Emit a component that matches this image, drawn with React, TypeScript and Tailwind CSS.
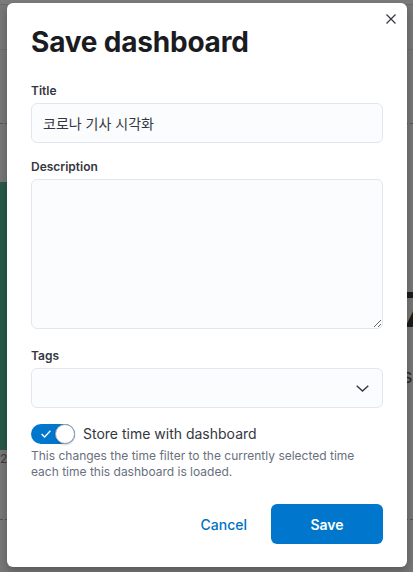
import React from "react";

const font = { fontFamily: "Inter, 'Noto Sans CJK KR', sans-serif" };

function Field({ label, children }: { label: string; children: React.ReactNode }) {
  return (
    <div className="flex flex-col">
      <label className="text-[12px] leading-[16px] font-semibold text-[#343741] mb-[4px]">{label}</label>
      {children}
    </div>
  );
}

export default function App() {
  return (
    <div className="relative w-[413px] h-[572px] overflow-hidden bg-[#777777]" style={font}>
      {/* dimmed dashboard behind the modal */}
      <div className="flex flex-col h-full">
        <div className="h-[5px] border-b border-[#6c6c6c] bg-[#7b7b7b]" />
        <div className="h-[45px] border-b border-[#6c6c6c]" />
        <div className="h-[74px] border-b border-dashed border-[#555]" />
        <div className="flex h-[396px] border-b border-dashed border-[#555]">
          <div className="flex flex-col w-[12px]">
            <div className="h-[58px]" />
            <div className="h-[268px] bg-[#29594a]" />
            <div className="text-[12px] leading-[16px] text-[#3a3a3a] mt-[1px]">2</div>
          </div>
          <div className="flex-1" />
          <div className="flex flex-col w-[10px] overflow-hidden">
            <div className="h-[166px]" />
            <div className="text-[48px] leading-[40px] font-bold text-[#1b1b1b] -ml-[2px]">7</div>
            <div className="h-[36px]" />
            <div className="text-[20px] leading-[20px] text-[#2a2a2a] -ml-[1px]">s</div>
          </div>
        </div>
      </div>

      {/* modal */}
      <div className="absolute left-[7px] top-[3px] w-[400px] h-[564px] bg-white rounded-[6px] shadow-[0_4px_8px_rgba(0,0,0,0.25)] flex flex-col px-[24px]">
        <button className="absolute right-[8px] top-[8px] w-[16px] h-[16px] flex items-center justify-center text-[#343741]">
          <svg width="10" height="10" viewBox="0 0 10 10" fill="none" stroke="currentColor" strokeWidth="1.2">
            <path d="M0.5 0.5 L9.5 9.5 M9.5 0.5 L0.5 9.5" />
          </svg>
        </button>

        <h1 className="mt-[22px] text-[28px] leading-[35px] font-bold text-[#1a1c21] tracking-[-0.2px]">Save dashboard</h1>

        <div className="mt-[23px]">
          <Field label="Title">
            <input
              className="h-[40px] w-full rounded-[6px] bg-[#fbfcfd] border border-[#e3e6ee] px-[11px] text-[14px] text-[#343741] outline-none"
              defaultValue="코로나 기사 시각화"
            />
          </Field>
        </div>

        <div className="mt-[16px]">
          <Field label="Description">
            <textarea className="block h-[150px] w-full rounded-[6px] bg-[#fbfcfd] border border-[#e3e6ee] px-[11px] py-[8px] text-[14px] text-[#343741] outline-none resize-y" />
          </Field>
        </div>

        <div className="mt-[19px]">
          <Field label="Tags">
            <div className="h-[40px] w-full rounded-[6px] bg-[#fbfcfd] border border-[#e3e6ee] flex items-center justify-end pr-[13px]">
              <svg width="13" height="7" viewBox="0 0 13 7" fill="none" stroke="#343741" strokeWidth="1.4">
                <path d="M0.7 0.7 L6.5 6 L12.3 0.7" />
              </svg>
            </div>
          </Field>
        </div>

        <div className="mt-[16px] flex items-center">
          <div className="relative w-[44px] h-[20px] rounded-full bg-[#0077cc] flex items-center">
            <svg className="ml-[10px]" width="10" height="8" viewBox="0 0 10 8" fill="none" stroke="white" strokeWidth="1.3">
              <path d="M0.6 4 L3.6 7 L9.4 0.8" />
            </svg>
            <div className="absolute right-0 top-0 w-[20px] h-[20px] rounded-full bg-white border border-[#98a2b3] shadow-[0_1px_2px_rgba(0,0,0,0.2)]" />
          </div>
          <span className="ml-[8px] text-[14px] leading-[20px] text-[#343741]">Store time with dashboard</span>
        </div>
        <p className="mt-[4px] text-[12px] leading-[16px] text-[#69707d]">
          This changes the time filter to the currently selected time each time this dashboard is loaded.
        </p>

        <div className="mt-[24px] flex justify-end items-center gap-[12px]">
          <button className="h-[40px] px-[12px] text-[14px] font-medium text-[#0071c2]">Cancel</button>
          <button className="h-[40px] w-[112px] rounded-[6px] bg-[#0077cc] text-white text-[14px] font-semibold">Save</button>
        </div>
      </div>
    </div>
  );
}
